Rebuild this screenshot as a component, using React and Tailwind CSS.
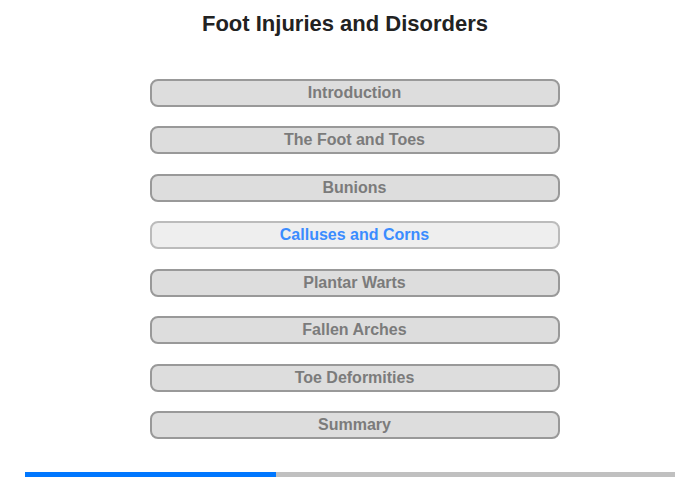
export default function App() {
  const items = [
    "Introduction",
    "The Foot and Toes",
    "Bunions",
    "Calluses and Corns",
    "Plantar Warts",
    "Fallen Arches",
    "Toe Deformities",
    "Summary",
  ];
  return (
    <div className="w-[700px] h-[480px] bg-white flex flex-col" style={{ fontFamily: '"Liberation Sans", Arial, sans-serif' }}>
      <div className="pt-[11px] text-center">
        <h1 className="text-[22px] leading-[26px] font-bold text-[#222222] pr-[10px]">Foot Injuries and Disorders</h1>
      </div>
      <div className="mt-[42px] flex flex-col items-center gap-[19.45px] pl-[9px]">
        {items.map((t, i) => (
          <div
            key={t}
            className={
              i === 3
                ? "w-[410px] h-[28px] rounded-[8px] border-2 border-[#bbbbbb] bg-[#eeeeee] flex items-center justify-center text-[16px] font-bold text-[#3b8cff]"
                : "w-[410px] h-[28px] rounded-[8px] border-2 border-[#999999] bg-[#dddddd] flex items-center justify-center text-[16px] font-bold text-[#7b7b7b]"
            }
          >
            {t}
          </div>
        ))}
      </div>
      <div className="mt-[33px] mx-[25px] h-[5px] flex bg-[#c0c0c0]">
        <div className="w-[251px] h-full bg-[#0077ff]" />
      </div>
    </div>
  );
}
